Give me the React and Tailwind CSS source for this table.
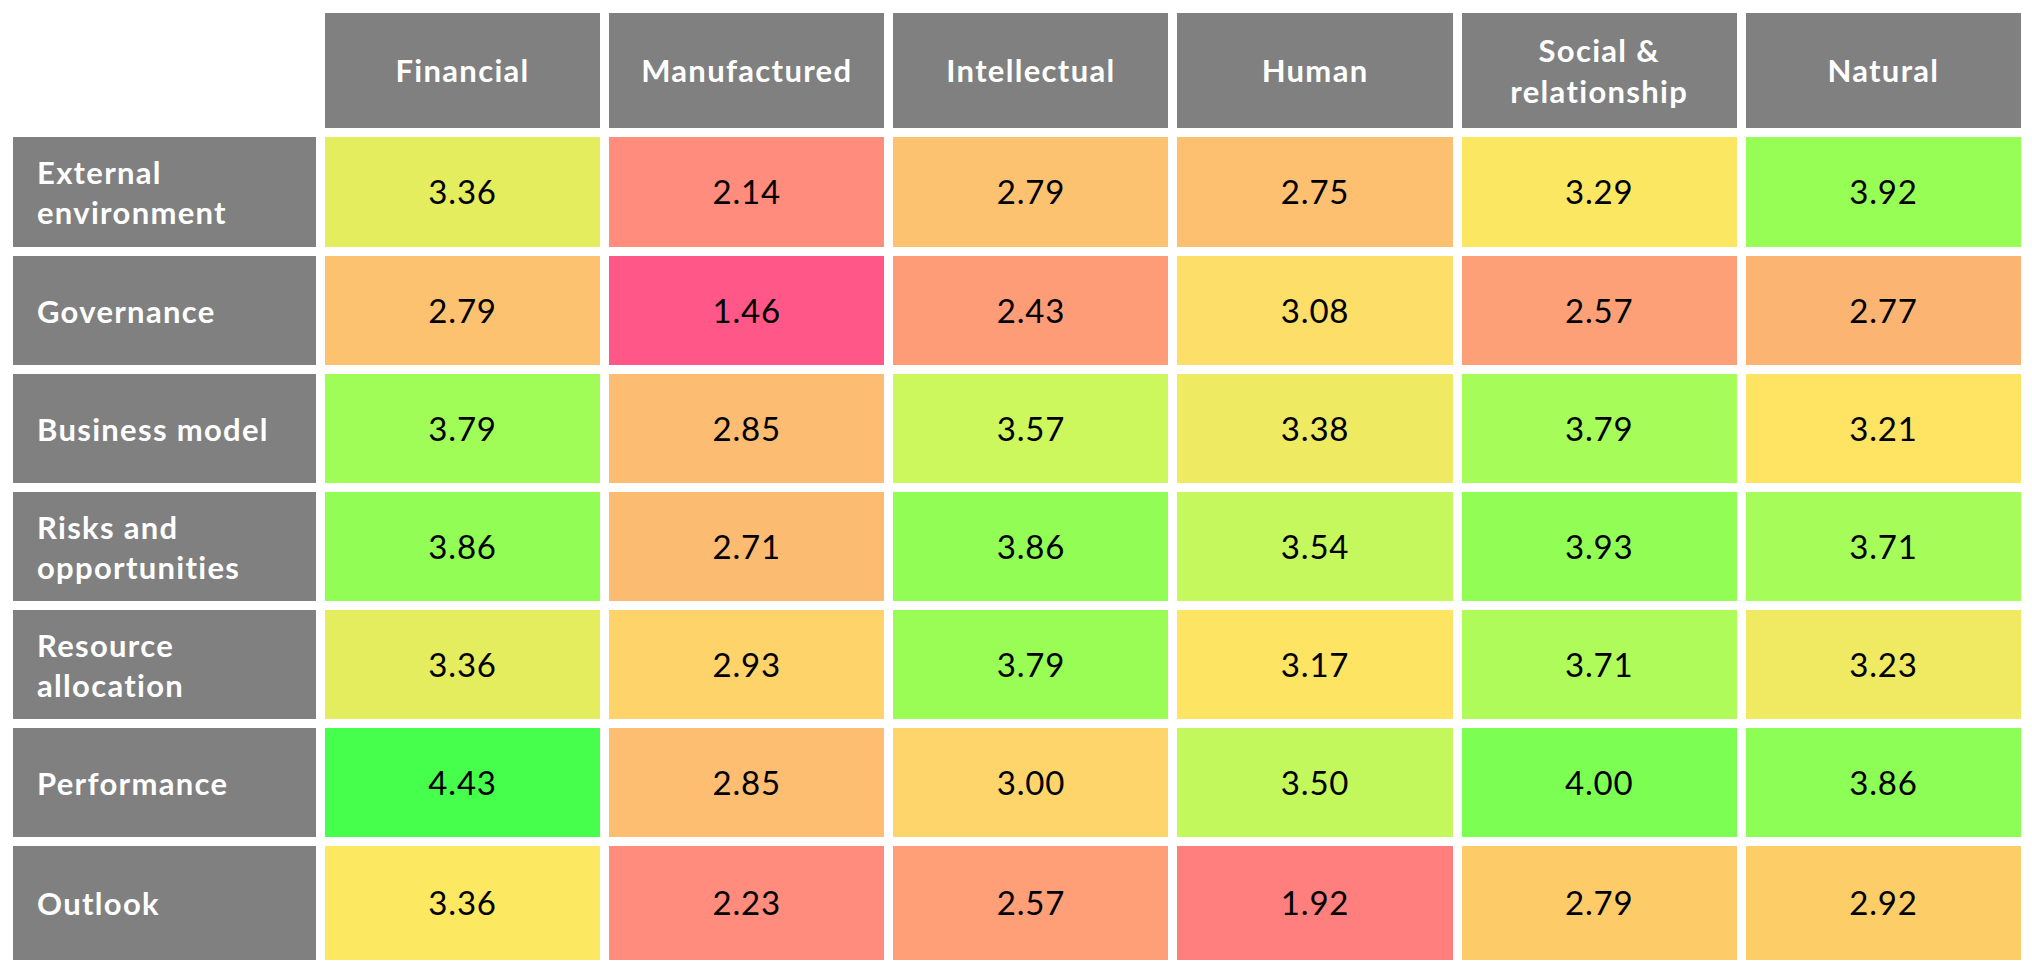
import React from "react";

const columns = ["Financial", "Manufactured", "Intellectual", "Human", "Social & relationship", "Natural"];

// each cell: [value, bg class]
const rows = [
  {
    label: "External environment",
    h: "h-[110px]",
    cells: [
      ["3.36", "bg-[#e4ed5e]"],
      ["2.14", "bg-[#ff8c7c]"],
      ["2.79", "bg-[#fdc270]"],
      ["2.75", "bg-[#fdc070]"],
      ["3.29", "bg-[#fce762]"],
      ["3.92", "bg-[#97fe56]"],
    ],
  },
  {
    label: "Governance",
    h: "h-[109px]",
    cells: [
      ["2.79", "bg-[#fdc270]"],
      ["1.46", "bg-[#ff5888]"],
      ["2.43", "bg-[#fe9c78]"],
      ["3.08", "bg-[#fdde68]"],
      ["2.57", "bg-[#fda077]"],
      ["2.77", "bg-[#fcb472]"],
    ],
  },
  {
    label: "Business model",
    h: "h-[109px]",
    cells: [
      ["3.79", "bg-[#a0fd58]"],
      ["2.85", "bg-[#fcbd72]"],
      ["3.57", "bg-[#ccf85e]"],
      ["3.38", "bg-[#eeea62]"],
      ["3.79", "bg-[#a6fc58]"],
      ["3.21", "bg-[#fee462]"],
    ],
  },
  {
    label: "Risks and opportunities",
    h: "h-[109px]",
    cells: [
      ["3.86", "bg-[#92fe55]"],
      ["2.71", "bg-[#fbbc72]"],
      ["3.86", "bg-[#92fe55]"],
      ["3.54", "bg-[#c5f85c]"],
      ["3.93", "bg-[#92fe55]"],
      ["3.71", "bg-[#a6fc58]"],
    ],
  },
  {
    label: "Resource allocation",
    h: "h-[109px]",
    cells: [
      ["3.36", "bg-[#e4ed5e]"],
      ["2.93", "bg-[#fdd36a]"],
      ["3.79", "bg-[#99fd56]"],
      ["3.17", "bg-[#fde462]"],
      ["3.71", "bg-[#aefb5a]"],
      ["3.23", "bg-[#efea62]"],
    ],
  },
  {
    label: "Performance",
    h: "h-[109px]",
    cells: [
      ["4.43", "bg-[#46ff4c]"],
      ["2.85", "bg-[#fdbe72]"],
      ["3.00", "bg-[#fdd56a]"],
      ["3.50", "bg-[#c3f85c]"],
      ["4.00", "bg-[#7dfe52]"],
      ["3.86", "bg-[#8cfe55]"],
    ],
  },
  {
    label: "Outlook",
    h: "h-[114px]",
    cells: [
      ["3.36", "bg-[#fde862]"],
      ["2.23", "bg-[#ff8c7c]"],
      ["2.57", "bg-[#fe9f77]"],
      ["1.92", "bg-[#ff7e7e]"],
      ["2.79", "bg-[#fdcb68]"],
      ["2.92", "bg-[#fdcd68]"],
    ],
  },
];

export default function App() {
  return (
    <div className="min-h-screen w-[2032px] bg-white pl-[13px] pt-[13px] font-['Lato','Liberation_Sans',sans-serif]">
      <div className="w-[2008px] grid grid-cols-[303px_repeat(6,minmax(0,1fr))] gap-x-[9px] gap-y-[9px]">
        {/* header row */}
        <div className="h-[115px]" />
        {columns.map((c) => (
          <div
            key={c}
            className="h-[115px] bg-[#808080] flex items-center justify-center px-3 text-center text-white text-[31px] font-bold leading-[41px] tracking-[1.3px]"
          >
            <span className={c.startsWith("Social") ? "w-[230px]" : ""}>{c}</span>
          </div>
        ))}

        {/* data rows */}
        {rows.map((r) => (
          <React.Fragment key={r.label}>
            <div
              className={`${r.h} bg-[#808080] flex items-center pl-6 pr-3 text-white text-[31px] font-bold leading-[40px] tracking-[1.3px]`}
            >
              <span>{r.label}</span>
            </div>
            {r.cells.map(([v, bg], i) => (
              <div
                key={i}
                className={`${r.h} ${bg} flex items-center justify-center text-black text-[33px] tracking-[0.8px]`}
              >
                {v}
              </div>
            ))}
          </React.Fragment>
        ))}
      </div>
    </div>
  );
}
